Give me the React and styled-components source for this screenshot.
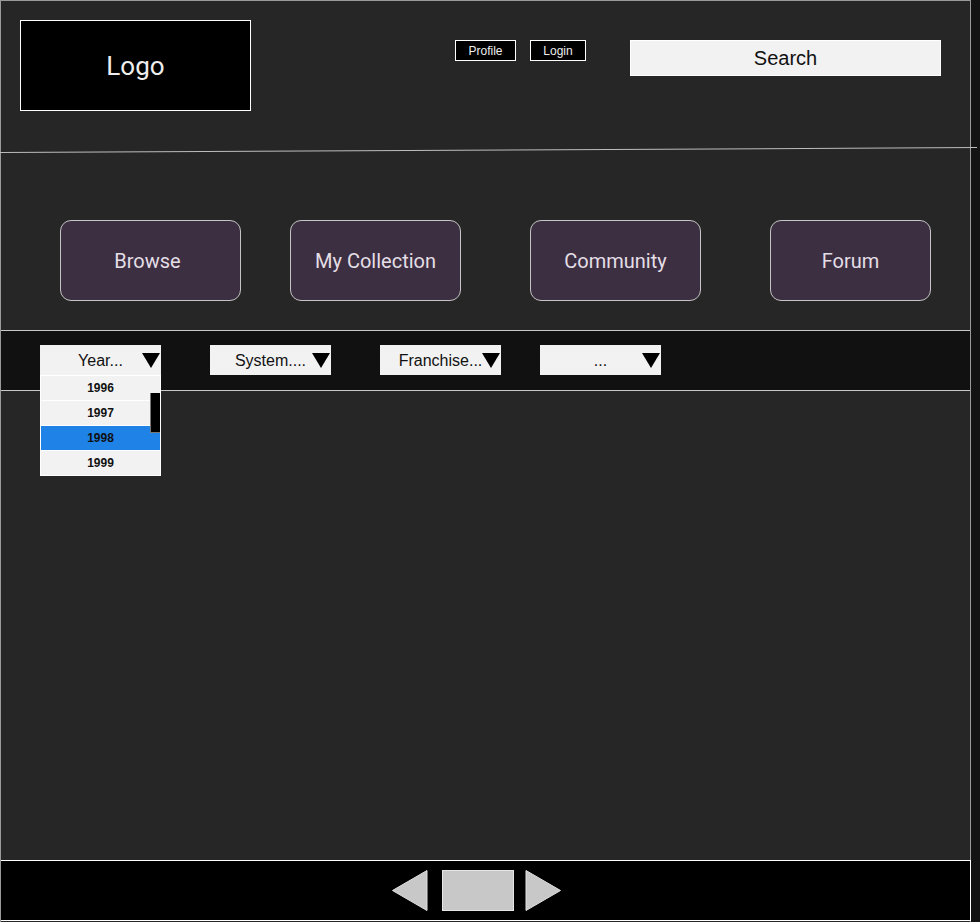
import React from 'react'
import styled, {createGlobalStyle} from 'styled-components'

const GlobalStyle = createGlobalStyle`
  html, body {
    margin: 0;
    padding: 0;
    background: #131313;
  }
  body {
    font-family: "Liberation Sans", Arial, sans-serif;
  }
`

const Frame = styled.div`
  width: 971px;
  height: 922px;
  box-sizing: border-box;
  border: 1px solid #9a9a9a;
  border-bottom: none;
  padding-bottom: 1px;
  background: #262626;
  display: flex;
  flex-direction: column;
`

const Header = styled.header`
  height: 149px;
  box-sizing: border-box;
  padding: 19px 0 0 19px;
  display: flex;
  align-items: flex-start;
`

const Logo = styled.div`
  width: 231px;
  height: 91px;
  box-sizing: border-box;
  border: 1px solid #fff;
  background: #000;
  color: #eee;
  font-family: Roboto, "Liberation Sans", sans-serif;
  font-size: 26px;
  display: flex;
  align-items: center;
  justify-content: center;
`

const Links = styled.div`
  display: flex;
  gap: 14px;
  margin: 20px 0 0 204px;
`

const LinkButton = styled.button`
  width: ${p => p.$w}px;
  height: 21px;
  box-sizing: border-box;
  border: 1px solid #fff;
  background: #000;
  color: #eee;
  font-family: "Liberation Sans", Arial, sans-serif;
  font-size: 12px;
  padding: 0;
  cursor: pointer;
`

const Search = styled.div`
  width: 311px;
  height: 36px;
  box-sizing: border-box;
  margin: 20px 0 0 44px;
  border: 1px solid #fff;
  background: #f2f2f2;
  color: #111;
  font-size: 20px;
  display: flex;
  align-items: center;
  justify-content: center;
`

const Divider = styled.div`
  width: 977px;
  height: 1px;
  margin-left: -1px;
  background: #bdbdbd;
  transform-origin: left center;
  transform: translateY(2px) rotate(-0.29deg);
`

const Nav = styled.nav`
  display: flex;
  margin: 69px 0 0 59px;
`

const NavButton = styled.button`
  width: ${p => p.$w}px;
  height: 81px;
  margin-left: ${p => p.$ml || 0}px;
  box-sizing: border-box;
  border: 1px solid #c4c4c4;
  border-radius: 11px;
  background: #3d2f42;
  color: #e4dfe6;
  font-family: Roboto, "Liberation Sans", sans-serif;
  font-size: 20px;
  padding: 0 ${p => p.$pr || 0}px 0 0;
  cursor: pointer;
`

const FilterBar = styled.div`
  margin-top: 29px;
  height: 61px;
  box-sizing: border-box;
  border-top: 1px solid #c8c8c8;
  border-bottom: 1px solid #c8c8c8;
  background: #111;
  padding: 14px 0 0 39px;
  display: flex;
  align-items: flex-start;
`

const Select = styled.div`
  position: relative;
  width: 121px;
  height: 30px;
  margin-left: ${p => p.$ml || 0}px;
  background: #f2f2f2;
  color: #111;
  font-size: 16px;
  display: flex;
  align-items: center;
  justify-content: center;
  padding-top: 1px;
  box-sizing: border-box;
`

const Arrow = styled.span`
  position: absolute;
  right: 1px;
  top: 8px;
  width: 0;
  height: 0;
  border-left: 9px solid transparent;
  border-right: 9px solid transparent;
  border-top: 15px solid #000;
`

const Options = styled.ul`
  position: absolute;
  top: 30px;
  left: 0;
  width: 121px;
  box-sizing: border-box;
  margin: 0;
  padding: 0;
  list-style: none;
  border: 1px solid #fff;
  background: #fff;
  z-index: 2;
`

const Option = styled.li`
  height: 24px;
  margin-bottom: ${p => (p.$last ? 0 : 1)}px;
  background: ${p => (p.$active ? '#1e82e6' : '#f2f2f2')};
  color: #111;
  font-size: 12px;
  font-weight: bold;
  display: flex;
  align-items: center;
  justify-content: center;
`

const Scrollbar = styled.span`
  position: absolute;
  right: 0;
  top: 17px;
  width: 9px;
  height: 39px;
  background: #000;
  border-left: 1px solid #777;
  border-bottom: 1px solid #777;
`

const Main = styled.main`
  flex: 1;
`

const Footer = styled.footer`
  height: 61px;
  box-sizing: border-box;
  border-top: 1px solid #fff;
  border-bottom: 1px solid #fff;
  border-right: 1px solid #fff;
  margin-right: -1px;
  background: #000;
  display: flex;
  align-items: center;
  justify-content: center;
`

const Pager = styled.div`
  display: flex;
  align-items: center;
  margin-left: -18px;
`

const PageBox = styled.div`
  width: 72px;
  height: 41px;
  box-sizing: border-box;
  margin: 0 11px 0 14px;
  background: #c8c8c8;
  border: 1px solid #e6e6e6;
`

const Tri = ({dir}) => (
  <svg width="36" height="41" viewBox="0 0 36 41">
    {dir === 'left' ? (
      <polygon points="35,0.5 35,40.5 0.5,20.5" fill="#c8c8c8" stroke="#e0e0e0" strokeWidth="1" />
    ) : (
      <polygon points="1,0.5 1,40.5 35.5,20.5" fill="#c8c8c8" stroke="#e0e0e0" strokeWidth="1" />
    )}
  </svg>
)

const years = ['1996', '1997', '1998', '1999']

export default function App() {
  return (
    <>
      <GlobalStyle />
      <Frame>
        <Header>
          <Logo>Logo</Logo>
          <Links>
            <LinkButton $w={61}>Profile</LinkButton>
            <LinkButton $w={56}>Login</LinkButton>
          </Links>
          <Search>Search</Search>
        </Header>
        <Divider />
        <Nav>
          <NavButton $w={181} $pr={6}>Browse</NavButton>
          <NavButton $w={171} $ml={49}>My Collection</NavButton>
          <NavButton $w={171} $ml={69}>Community</NavButton>
          <NavButton $w={161} $ml={69}>Forum</NavButton>
        </Nav>
        <FilterBar>
          <Select>
            Year...
            <Arrow />
            <Options>
              {years.map((y, i) => (
                <Option key={y} $active={y === '1998'} $last={i === years.length - 1}>{y}</Option>
              ))}
              <Scrollbar />
            </Options>
          </Select>
          <Select $ml={49}>System....<Arrow /></Select>
          <Select $ml={49}>Franchise...<Arrow /></Select>
          <Select $ml={39}>...<Arrow /></Select>
        </FilterBar>
        <Main />
        <Footer>
          <Pager>
            <Tri dir="left" />
            <PageBox />
            <Tri dir="right" />
          </Pager>
        </Footer>
      </Frame>
    </>
  )
}
